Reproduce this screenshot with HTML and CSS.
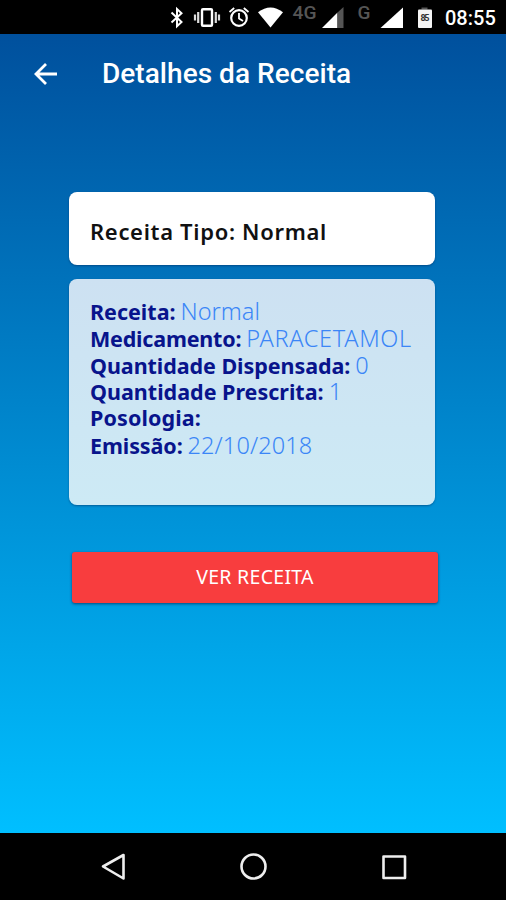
FILE: index.html
```html
<!DOCTYPE html>
<html lang="pt">
<head>
<meta charset="utf-8">
<title>Detalhes da Receita</title>
<link rel="stylesheet" href="styles.css">
</head>
<body>
<div class="screen">
  <div class="status">
    <svg class="status-icons" width="270" height="34" viewBox="170 0 270 34">
      <path d="M171.500 12.500l10 9.500-4.500 4.200V9l4.500 4.200-10 9.300" fill="none" stroke="#fff" stroke-width="2"/>
      <rect x="202" y="9.300" width="10" height="16.400" rx="1" fill="none" stroke="#fff" stroke-width="2.400"/>
      <path d="M198.200 12v11M215.800 12v11M195 14.500v6M219 14.500v6" stroke="#ddd" stroke-width="2.200"/>
      <circle cx="239" cy="18" r="7.800" fill="none" stroke="#fff" stroke-width="2.200"/>
      <path d="M239 13v5.400l4 2.600M229.500 12l4.700-4M248.500 12l-4.700-4" fill="none" stroke="#fff" stroke-width="1.800"/>
      <path d="M258 12.300Q270.500 2.500 283 12.300L270.500 27.500z" fill="#fff"/>
      <text class="network" x="292.500" y="18.800" textLength="24" lengthAdjust="spacingAndGlyphs">4G</text>
      <path d="M322 28l15.500-15.500V28z" fill="#fff"/>
      <path d="M337.500 12.500L343.500 7v21h-6z" fill="#555"/>
      <text class="network" x="357.500" y="19" textLength="13" lengthAdjust="spacingAndGlyphs">G</text>
      <path d="M380.500 28L403 7.500V28z" fill="#fff"/>
      <path d="M421.500 7.500h6v2h-6z" fill="#555"/>
      <rect x="418" y="9.500" width="14" height="18.500" rx="1" fill="#f4f4f4"/>
      <text class="charge" x="420.500" y="20.500" textLength="9">85</text>
    </svg>
    <span class="clock">08:55</span>
  </div>
  <header class="appbar">
    <svg class="back" width="24" height="24" viewBox="0 0 24 24"><path d="M23 12H2M12 2L2 12l10 10" fill="none" stroke="#fff" stroke-width="2.800"/></svg>
    <h1 class="title">Detalhes da Receita</h1>
  </header>
  <main class="content">
    <section class="card kind"><span>Receita Tipo: Normal</span></section>
    <section class="card details">
      <div class="row"><b class="l-receita">Receita:</b><span class="v-normal">Normal</span></div>
      <div class="row"><b class="l-medicamento">Medicamento:</b><span class="v-drug">PARACETAMOL</span></div>
      <div class="row"><b class="l-dispensada">Quantidade Dispensada:</b><span>0</span></div>
      <div class="row"><b class="l-prescrita">Quantidade Prescrita:</b><span>1</span></div>
      <div class="row"><b class="l-posologia">Posologia:</b></div>
      <div class="row"><b class="l-emissao">Emissão:</b><span class="v-date">22/10/2018</span></div>
    </section>
    <button class="action">VER RECEITA</button>
  </main>
  <nav class="navbar">
    <svg width="506" height="67" viewBox="0 833 506 67" fill="none" stroke="#eee" stroke-width="2.600" stroke-linejoin="round">
      <path d="M103 866.500L123.500 855v23.500z"/>
      <circle cx="253.500" cy="866.500" r="12"/>
      <rect x="383.500" y="856.500" width="21.500" height="21.500"/>
    </svg>
  </nav>
</div>
</body>
</html>
```
FILE: styles.css
```css
* { box-sizing: border-box; }
body { margin: 0; }
.screen { width: 506px; height: 900px; display: flex; flex-direction: column; background: linear-gradient(#00509d 34px, #00bfff 833px); font-family: "Noto Sans", sans-serif; overflow: hidden; }
.status { height: 34px; flex: none; background: #000; display: flex; padding-left: 170px; }
.status-icons { flex: none; }
.network { font: 500 18px Roboto, sans-serif; fill: #555; }
.charge { font: 700 9px Roboto, sans-serif; fill: #333; }
.clock { font: 500 20px/36px Roboto, sans-serif; color: #fff; margin-left: 5px; }
.appbar { height: 80px; flex: none; display: flex; align-items: center; padding-left: 34px; }
.back { flex: none; }
.title { margin: 0 0 0 44px; color: #fff; font: 500 28px/32px Roboto, sans-serif; letter-spacing: .04px; white-space: nowrap; }
.content { flex: 1; padding: 78px 0 0 69px; display: flex; flex-direction: column; }
.card { width: 366px; border-radius: 8px; box-shadow: 0 1px 2px rgba(0,30,80,.45); white-space: nowrap; }
.kind { height: 73px; background: #fff; padding: 23px 21px; font-size: 22px; line-height: 32px; font-weight: 650; color: #111; letter-spacing: .68px; }
.details { height: 226px; margin-top: 14px; padding: 19px 21px; background: linear-gradient(#cde1f2, #cdeaf5); }
.row { height: 26.750px; line-height: 26.750px; font-size: 23.500px; display: flex; align-items: baseline; gap: 5px; color: #3b86f7; font-weight: 300; }
.row b { font-size: 21.500px; font-weight: 700; color: #08148c; }
.l-receita { letter-spacing: 0; }
.l-medicamento { letter-spacing: -.2px; }
.l-dispensada { letter-spacing: -.06px; }
.l-prescrita { letter-spacing: 0; }
.l-posologia { letter-spacing: .1px; }
.l-emissao { letter-spacing: -.1px; }
.v-drug { letter-spacing: .65px; }
.v-date { letter-spacing: .1px; }
.action { width: 366px; height: 51px; margin: 47px 0 0 3px; padding: 0 0 3px; border: 0; border-radius: 3px; background: #f83d3e; color: #fff; font: 400 19.500px "Noto Sans", sans-serif; letter-spacing: .3px; box-shadow: 0 1px 3px rgba(0,20,60,.6); }
.navbar { height: 67px; flex: none; background: #000; }
.navbar svg { display: block; }
```
